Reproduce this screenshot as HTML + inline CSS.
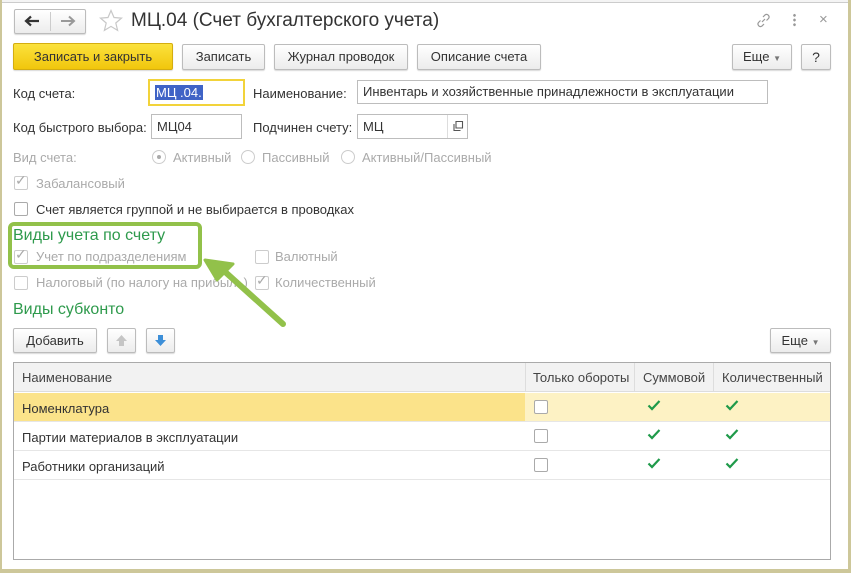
<!DOCTYPE html>
<html><head><meta charset="utf-8"><style>
*{box-sizing:border-box;margin:0;padding:0}
body{width:851px;height:573px;position:relative;background:#fff;font-family:"Liberation Sans",Arial,sans-serif;font-size:13px;color:#333;overflow:hidden}
.a{position:absolute;white-space:nowrap}
.btn{position:absolute;border:1px solid #bcbcbc;border-radius:2px;background:linear-gradient(#fff,#ececec);box-shadow:0 1px 1px rgba(0,0,0,.15);text-align:center;color:#333;font-size:13px}
.inp{position:absolute;border:1px solid #bdbdbd;background:#fff;padding-left:5px;font-size:13px;color:#333}
.gray{color:#aaa}
.cb{position:absolute;width:14px;height:14px;border:1px solid #aaa;border-radius:2px;background:#fff}
.cb.d{border-color:#ccc}
.rd{position:absolute;width:14px;height:14px;border:1px solid #ccc;border-radius:50%;background:#fff}
.green{color:#2e9a4c;font-size:16px}
</style></head><body>
<div class="a" style="left:0;top:0;width:851px;height:3px;border-bottom:1px solid #ccc;background:#f4f4f4"></div>
<div class="a" style="left:0;top:0;width:2px;height:573px;background:#cdc79a"></div>
<div class="a" style="left:848px;top:0;width:3px;height:573px;background:#cdc79a"></div>
<div class="a" style="left:0;top:569px;width:851px;height:4px;background:#cdc79a"></div>

<div class="btn" style="left:14px;top:9px;width:72px;height:25px"></div>
<div class="a" style="left:50px;top:12px;width:1px;height:19px;background:#ccc"></div>
<svg class="a" style="left:24px;top:15px" width="16" height="12" viewBox="0 0 16 12"><path d="M15 6H3M7 1.5L2 6l5 4.5" fill="none" stroke="#333" stroke-width="2.2"/></svg>
<svg class="a" style="left:60px;top:15px" width="16" height="12" viewBox="0 0 16 12"><path d="M1 6h12M9 1.5L14 6l-5 4.5" fill="none" stroke="#999" stroke-width="2"/></svg>
<svg class="a" style="left:99px;top:9px" width="24" height="23" viewBox="0 0 24 23"><path d="M12 1.5l3 7 7.5.6-5.7 4.9 1.8 7.4L12 17.4l-6.6 4 1.8-7.4L1.5 9.1 9 8.5z" fill="none" stroke="#c8c8c8" stroke-width="1.2"/></svg>
<div class="a" style="left:131px;top:10px;font-size:19px;color:#333">МЦ.04 (Счет бухгалтерского учета)</div>
<svg class="a" style="left:755px;top:12px" width="17" height="17" viewBox="0 0 17 17"><path d="M7 10l3-3M5.5 8.5l-2 2a2.5 2.5 0 0 0 3.5 3.5l2-2M11.5 8.5l2-2A2.5 2.5 0 0 0 10 3l-2 2" fill="none" stroke="#999" stroke-width="1.2"/></svg>
<div class="a" style="left:793px;top:13px;width:3px;height:14px;background:radial-gradient(circle,#999 1.2px,transparent 1.5px) 0 0/3px 4.7px"></div>
<div class="a" style="left:819px;top:11px;font-size:15px;color:#999">×</div>

<div class="btn" style="left:13px;top:43px;width:160px;height:27px;line-height:25px;background:linear-gradient(#fbe23d,#f1c60c);border-color:#d4ad10;color:#333">Записать и закрыть</div>
<div class="btn" style="left:182px;top:44px;width:83px;height:26px;line-height:24px">Записать</div>
<div class="btn" style="left:274px;top:44px;width:134px;height:26px;line-height:24px">Журнал проводок</div>
<div class="btn" style="left:417px;top:44px;width:124px;height:26px;line-height:24px">Описание счета</div>
<div class="btn" style="left:732px;top:44px;width:60px;height:26px;line-height:24px">Еще <span style="font-size:8px;color:#777">▼</span></div>
<div class="btn" style="left:801px;top:44px;width:30px;height:26px;line-height:24px;font-size:14px">?</div>

<div class="a" style="left:13px;top:86px">Код счета:</div>
<div class="inp" style="left:148px;top:79px;width:97px;height:27px;border:2px solid #f2d33a;padding-left:5px;line-height:23px"><span style="background:#3f63c6;color:#fff;padding:0 1px">МЦ .04.</span></div>
<div class="a" style="left:253px;top:86px">Наименование:</div>
<div class="inp" style="left:357px;top:80px;width:411px;height:24px;line-height:22px">Инвентарь и хозяйственные принадлежности в эксплуатации</div>

<div class="a" style="left:13px;top:120px">Код быстрого выбора:</div>
<div class="inp" style="left:151px;top:114px;width:91px;height:25px;line-height:23px">МЦ04</div>
<div class="a" style="left:253px;top:120px">Подчинен счету:</div>
<div class="inp" style="left:357px;top:114px;width:111px;height:25px;line-height:23px">МЦ</div>
<div class="a" style="left:447px;top:115px;width:1px;height:23px;background:#ddd"></div>
<svg class="a" style="left:452px;top:120px" width="12" height="12" viewBox="0 0 12 12"><path d="M4 1.5h6.5v6.5H4zM2 4v6.5h6.5" fill="none" stroke="#555" stroke-width="1.1"/></svg>

<div class="a gray" style="left:13px;top:150px">Вид счета:</div>
<div class="rd" style="left:152px;top:150px"></div><div class="a" style="left:157px;top:155px;width:4px;height:4px;border-radius:50%;background:#aaa"></div>
<div class="a gray" style="left:173px;top:150px">Активный</div>
<div class="rd" style="left:241px;top:150px"></div>
<div class="a gray" style="left:262px;top:150px">Пассивный</div>
<div class="rd" style="left:341px;top:150px"></div>
<div class="a gray" style="left:362px;top:150px">Активный/Пассивный</div>

<div class="cb d" style="left:14px;top:176px"></div><div class="a" style="left:15px;top:172px;color:#aaa;font-size:14px">✓</div>
<div class="a gray" style="left:36px;top:176px">Забалансовый</div>
<div class="cb" style="left:14px;top:202px"></div>
<div class="a" style="left:36px;top:202px">Счет является группой и не выбирается в проводках</div>

<div class="a green" style="left:13px;top:227px">Виды учета по счету</div>
<div class="cb d" style="left:14px;top:250px"></div><div class="a" style="left:15px;top:246px;color:#aaa;font-size:14px">✓</div>
<div class="a gray" style="left:36px;top:249px">Учет по подразделениям</div>
<div class="cb d" style="left:255px;top:250px"></div>
<div class="a gray" style="left:275px;top:249px">Валютный</div>
<div class="cb d" style="left:14px;top:276px"></div>
<div class="a gray" style="left:36px;top:275px">Налоговый (по налогу на прибыль)</div>
<div class="cb d" style="left:255px;top:276px"></div><div class="a" style="left:256px;top:272px;color:#aaa;font-size:14px">✓</div>
<div class="a gray" style="left:275px;top:275px">Количественный</div>

<div class="a" style="left:8px;top:222px;width:194px;height:47px;border:4px solid #92c14a;border-radius:6px"></div>
<svg class="a" style="left:195px;top:250px" width="100" height="85" viewBox="0 0 100 85"><path d="M88 74L28 20" stroke="#92c14a" stroke-width="6" stroke-linecap="round"/><path d="M10 10l28 4-16 16z" fill="#92c14a" stroke="#92c14a" stroke-width="3" stroke-linejoin="round"/></svg>

<div class="a green" style="left:13px;top:301px">Виды субконто</div>

<div class="btn" style="left:13px;top:328px;width:84px;height:25px;line-height:23px">Добавить</div>
<div class="btn" style="left:107px;top:328px;width:29px;height:25px"><svg width="13" height="13" viewBox="0 0 13 13" style="margin-top:5px"><path d="M6.5 1L12 7H9v5H4V7H1z" fill="#c5c5c5"/></svg></div>
<div class="btn" style="left:146px;top:328px;width:29px;height:25px"><svg width="13" height="13" viewBox="0 0 13 13" style="margin-top:5px"><path d="M6.5 12L12 6H9V1H4v5H1z" fill="#3d8fd8"/></svg></div>
<div class="btn" style="left:770px;top:328px;width:61px;height:25px;line-height:23px">Еще <span style="font-size:8px;color:#777">▼</span></div>

<div class="a" style="left:13px;top:362px;width:818px;height:198px;border:1px solid #aaa;background:#fff"></div>
<div class="a" style="left:14px;top:363px;width:816px;height:29px;background:#f2f2f2;border-bottom:1px solid #ddd"></div>
<div class="a" style="left:525px;top:363px;width:1px;height:29px;background:#ddd"></div>
<div class="a" style="left:634px;top:363px;width:1px;height:29px;background:#ddd"></div>
<div class="a" style="left:713px;top:363px;width:1px;height:29px;background:#ddd"></div>
<div class="a" style="left:22px;top:370px;color:#444">Наименование</div>
<div class="a" style="left:533px;top:370px;color:#444">Только обороты</div>
<div class="a" style="left:643px;top:370px;color:#444">Суммовой</div>
<div class="a" style="left:722px;top:370px;color:#444">Количественный</div>

<div class="a" style="left:14px;top:393px;width:511px;height:28px;background:#fbe38a"></div>
<div class="a" style="left:525px;top:393px;width:305px;height:28px;background:#fdf2c4"></div>
<div class="a" style="left:14px;top:421px;width:816px;height:1px;background:#e6e6e6"></div>
<div class="a" style="left:14px;top:450px;width:816px;height:1px;background:#e6e6e6"></div>
<div class="a" style="left:14px;top:479px;width:816px;height:1px;background:#e6e6e6"></div>

<div class="a" style="left:22px;top:401px">Номенклатура</div>
<div class="a" style="left:22px;top:430px">Партии материалов в эксплуатации</div>
<div class="a" style="left:22px;top:459px">Работники организаций</div>

<div class="cb" style="left:534px;top:400px"></div>
<div class="cb" style="left:534px;top:429px"></div>
<div class="cb" style="left:534px;top:458px"></div>
<svg class="a" style="left:647px;top:399px" width="14" height="12"><path d="M1.5 6.5l3.5 3.5 7.5-8" fill="none" stroke="#1f9a4a" stroke-width="2.2"/></svg>
<svg class="a" style="left:725px;top:399px" width="14" height="12"><path d="M1.5 6.5l3.5 3.5 7.5-8" fill="none" stroke="#1f9a4a" stroke-width="2.2"/></svg>
<svg class="a" style="left:647px;top:428px" width="14" height="12"><path d="M1.5 6.5l3.5 3.5 7.5-8" fill="none" stroke="#1f9a4a" stroke-width="2.2"/></svg>
<svg class="a" style="left:725px;top:428px" width="14" height="12"><path d="M1.5 6.5l3.5 3.5 7.5-8" fill="none" stroke="#1f9a4a" stroke-width="2.2"/></svg>
<svg class="a" style="left:647px;top:457px" width="14" height="12"><path d="M1.5 6.5l3.5 3.5 7.5-8" fill="none" stroke="#1f9a4a" stroke-width="2.2"/></svg>
<svg class="a" style="left:725px;top:457px" width="14" height="12"><path d="M1.5 6.5l3.5 3.5 7.5-8" fill="none" stroke="#1f9a4a" stroke-width="2.2"/></svg>
</body></html>
